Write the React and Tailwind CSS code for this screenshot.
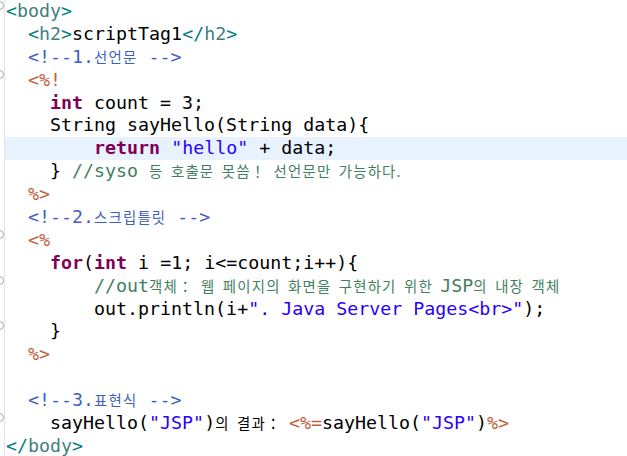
import React from "react";

const C = {
  tag: "text-[#3f7f7f]",
  br: "text-[#008080]",
  hc: "text-[#3f5fbf]",
  jsp: "text-[#bf5f3f]",
  kw: "text-[#7f0055] font-bold",
  str: "text-[#2a00ff]",
  jc: "text-[#3f7f5f]",
};

// Korean falls back to a narrower gothic face in the editor
const K = ({ children }) => (
  <span className="font-['Noto_Sans_CJK_KR',sans-serif] text-[14.4px] tracking-[1.2px] [word-spacing:3px]">{children}</span>
);

const lines = [
  { fold: true, body: <><span className={C.br}>&lt;</span><span className={C.tag}>body</span><span className={C.br}>&gt;</span></> },
  { body: <>{"  "}<span className={C.br}>&lt;</span><span className={C.tag}>h2</span><span className={C.br}>&gt;</span>scriptTag1<span className={C.br}>&lt;/</span><span className={C.tag}>h2</span><span className={C.br}>&gt;</span></> },
  { body: <>{"  "}<span className={C.hc}>&lt;!--1.<K>선언문</K> --&gt;</span></> },
  { fold: true, body: <>{"  "}<span className={C.jsp}>&lt;%!</span></> },
  { body: <>{"    "}<span className={C.kw}>int</span>{" count = 3;"}</> },
  { body: <>{"    String sayHello(String data){"}</> },
  { hl: true, body: <>{"        "}<span className={C.kw}>return</span>{" "}<span className={C.str}>"hello"</span>{" + data;"}</> },
  { body: <>{"    } "}<span className={C.jc}>//syso <K>등 호출문 못씀！ 선언문만 가능하다.</K></span></> },
  { body: <>{"  "}<span className={C.jsp}>%&gt;</span></> },
  { body: <>{"  "}<span className={C.hc}>&lt;!--2.<K>스크립틀릿</K> --&gt;</span></> },
  { fold: true, body: <>{"  "}<span className={C.jsp}>&lt;%</span></> },
  { body: <>{"    "}<span className={C.kw}>for</span>(<span className={C.kw}>int</span>{" i =1; i<=count;i++){"}</> },
  { fold: true, body: <>{"        "}<span className={C.jc}>//out<K>객체： 웹 페이지의 화면을 구현하기 위한 </K>JSP<K>의 내장 객체</K></span></> },
  { body: <>{"        out.println(i+"}<span className={C.str}>{"\". Java Server Pages<br>\""}</span>{");"}</> },
  { fold: true, body: <>{"    }"}</> },
  { body: <>{"  "}<span className={C.jsp}>%&gt;</span></> },
  { body: <>{" "}</> },
  { body: <>{"  "}<span className={C.hc}>&lt;!--3.<K>표현식</K> --&gt;</span></> },
  { fold: true, body: <>{"    sayHello("}<span className={C.str}>"JSP"</span>)<K>의 결과： </K><span className={C.jsp}>&lt;%=</span>sayHello(<span className={C.str}>"JSP"</span>)<span className={C.jsp}>%&gt;</span></> },
  { body: <><span className={C.br}>&lt;/</span><span className={C.tag}>body</span><span className={C.br}>&gt;</span></> },
];

export default function App() {
  return (
    <div className="w-[627px] h-[456px] overflow-hidden bg-white flex">
      <div className="w-[5px] shrink-0 border-r border-[#e4e4e4] flex flex-col">
        {lines.map((l, i) => (
          <div key={i} className="h-[22.9px] shrink-0 relative">
            {l.fold && (
              <span className="absolute left-[-5px] top-[1px] w-[9px] h-[9px] rounded-full border border-[#a8a8a8] bg-white" />
            )}
          </div>
        ))}
      </div>
      <div className="flex-1 flex flex-col font-['DejaVu_Sans_Mono',monospace] text-[18.3px] text-black">
        {lines.map((l, i) => (
          <div
            key={i}
            className={`h-[22.9px] shrink-0 leading-[22.9px] whitespace-pre pl-[1px] ${l.hl ? "bg-[#e8f2fe]" : ""}`}
          >
            {l.body}
          </div>
        ))}
      </div>
    </div>
  );
}
